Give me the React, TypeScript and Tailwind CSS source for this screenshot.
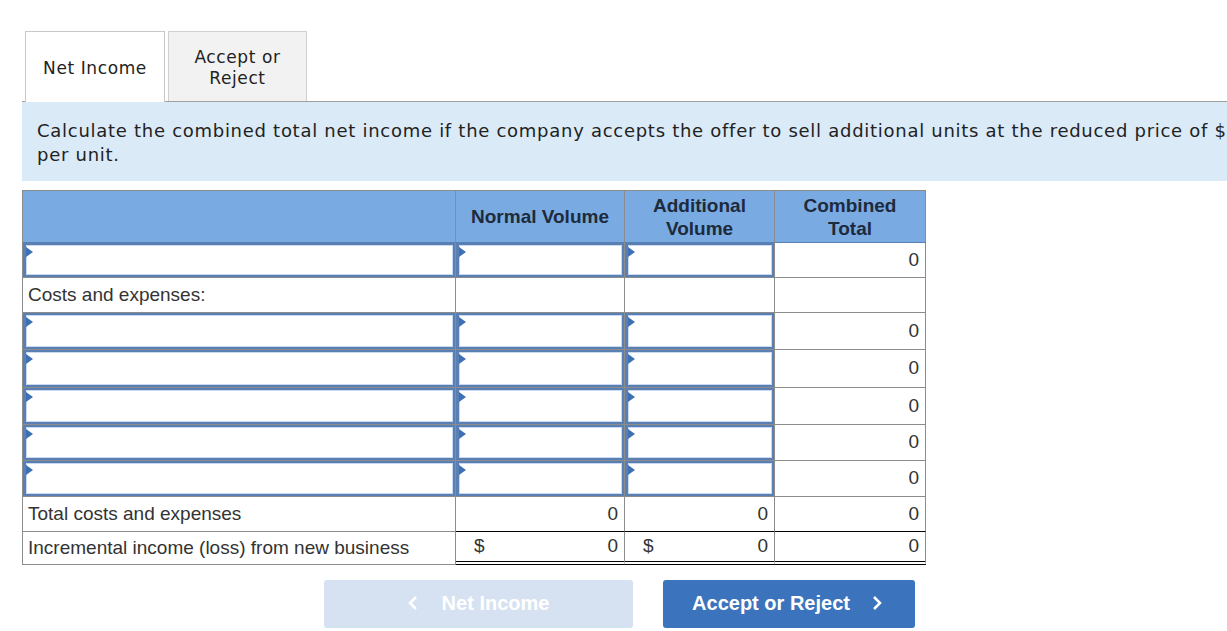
import React from 'react';

const cols = 'grid grid-cols-[433px_169px_150px_151px]';
const cell = 'border-r border-b border-[#8c8c8c]';

const InputBox: React.FC = () => (
  <div className="relative h-full w-full border-2 border-l-[3px] border-[#5a7fb3] bg-white shadow-[inset_0_0_0_1px_#c9daf0]">
    <span className="absolute left-0 top-[2px] h-0 w-0 border-y-[5px] border-l-[7px] border-y-transparent border-l-[#3e70b6]" />
  </div>
);

const Num: React.FC<{ dollar?: boolean; value?: string }> = ({ dollar, value = '0' }) => (
  <div className="flex h-full items-center justify-between pl-[18px] pr-[6px]">
    <span>{dollar ? '$' : ''}</span>
    <span>{value}</span>
  </div>
);

const inputHeights = [37, 38, 37, 36, 36];

export default function App() {
  return (
    <div className="h-[631px] w-[1227px] overflow-hidden bg-white pt-[31px]">
      {/* tabs */}
      <div className="flex pl-[25px] text-[17px] leading-[21px] tracking-[0.6px] text-[#222]" style={{ fontFamily: '"DejaVu Sans", Verdana, sans-serif' }}>
        <div className="relative z-10 -mb-px flex h-[71px] w-[140px] items-center justify-center border border-b-0 border-[#c8c8c8] bg-white pt-[2px]">
          Net Income
        </div>
        <div className="ml-[3px] flex h-[70px] w-[139px] items-center justify-center border border-b-0 border-[#d0d0d0] bg-[#f2f2f2] pt-[2px] text-center">
          Accept or
          <br />
          Reject
        </div>
      </div>

      {/* instructions */}
      <div className="ml-[22px] h-[80px] w-[1300px] border-t border-[#a0a0a0] bg-[#dbeaf7] pl-[15px] pt-[17px] text-[18px] leading-[24px] tracking-[0.72px] text-[#222] whitespace-nowrap" style={{ fontFamily: '"DejaVu Sans", Verdana, sans-serif' }}>
        Calculate the combined total net income if the company accepts the offer to sell additional units at the reduced price of $
        <br />
        per unit.
      </div>

      {/* table */}
      <div className="ml-[22px] mt-[9px] w-[904px] border-l border-t border-[#8c8c8c] text-[19px] text-[#333]" style={{ fontFamily: '"Liberation Sans", Arial, sans-serif' }}>
        <div className={`${cols} h-[52px] bg-[#7aaae2] font-bold leading-[23px] text-[#1d2b3c]`}>
          <div className={`${cell} border-b-[#5a7fb3]`} />
          <div className={`${cell} border-b-[#5a7fb3] flex items-center justify-center`}>Normal Volume</div>
          <div className={`${cell} border-b-[#5a7fb3] flex items-center justify-center text-center`}>
            Additional
            <br />
            Volume
          </div>
          <div className={`${cell} border-b-[#5a7fb3] flex items-center justify-center text-center`}>
            Combined
            <br />
            Total
          </div>
        </div>

        <div className={`${cols} h-[35px]`}>
          <div className={cell}><InputBox /></div>
          <div className={cell}><InputBox /></div>
          <div className={cell}><InputBox /></div>
          <div className={cell}><Num /></div>
        </div>

        <div className={`${cols} h-[35px]`}>
          <div className={`${cell} flex items-center pl-[5px]`}>Costs and expenses:</div>
          <div className={cell} />
          <div className={cell} />
          <div className={cell} />
        </div>

        {inputHeights.map((h, i) => (
          <div key={i} className={cols} style={{ height: h }}>
            <div className={cell}><InputBox /></div>
            <div className={cell}><InputBox /></div>
            <div className={cell}><InputBox /></div>
            <div className={cell}><Num /></div>
          </div>
        ))}

        <div className={`${cols} h-[35px]`}>
          <div className={`${cell} flex items-center pl-[5px]`}>Total costs and expenses</div>
          <div className={`${cell} border-b-black`}><Num /></div>
          <div className={`${cell} border-b-black`}><Num /></div>
          <div className={`${cell} border-b-black`}><Num /></div>
        </div>

        <div className={`${cols} h-[33px]`}>
          <div className={`${cell} flex items-center pl-[5px]`}>Incremental income (loss) from new business</div>
          <div className={`${cell} border-b-[4px] border-b-black [border-bottom-style:double]`}><Num dollar /></div>
          <div className={`${cell} border-b-[4px] border-b-black [border-bottom-style:double]`}><Num dollar /></div>
          <div className={`${cell} border-b-[4px] border-b-black [border-bottom-style:double]`}><Num /></div>
        </div>
      </div>

      {/* nav buttons */}
      <div className="mt-[15px] flex gap-[30px] pl-[324px] text-[20px] font-bold text-white" style={{ fontFamily: '"Liberation Sans", Arial, sans-serif' }}>
        <button className="flex h-[48px] w-[309px] items-center justify-center gap-[24px] rounded-[3px] bg-[#d6e2f1] pb-[2px]">
          <svg width="10" height="16" viewBox="0 0 10 16" fill="none" stroke="white" strokeWidth="2.5">
            <path d="M8 2 2 8l6 6" />
          </svg>
          Net Income
        </button>
        <button className="flex h-[48px] w-[252px] items-center justify-center gap-[22px] rounded-[3px] bg-[#3b74bc] pb-[2px] pr-[4px]">
          Accept or Reject
          <svg width="10" height="16" viewBox="0 0 10 16" fill="none" stroke="white" strokeWidth="2.5">
            <path d="M2 2l6 6-6 6" />
          </svg>
        </button>
      </div>
    </div>
  );
}
